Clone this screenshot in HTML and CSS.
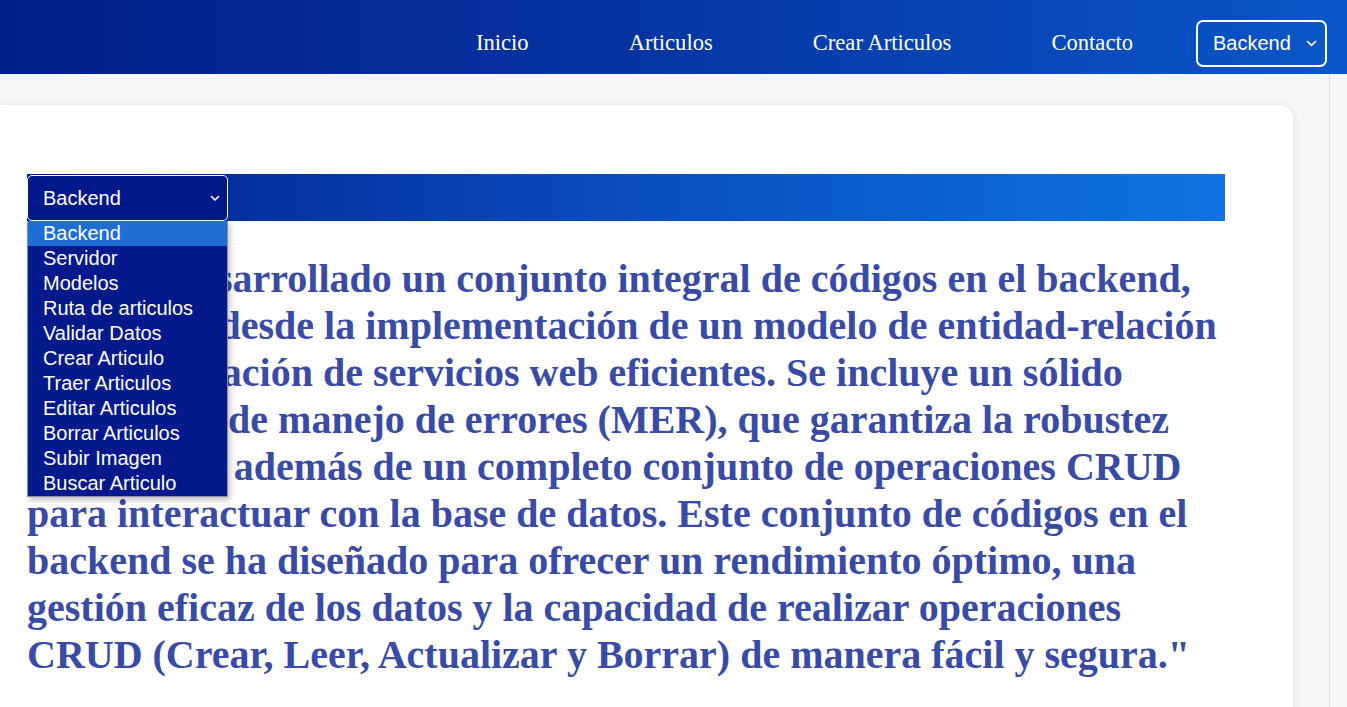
FILE: index.html
```html
<!DOCTYPE html>
<html lang="es">
<head>
<meta charset="utf-8">
<title>Backend</title>
<link rel="stylesheet" href="styles.css">
</head>
<body>
<header class="topbar">
  <nav class="nav">
    <a class="nav-link" href="#">Inicio</a>
    <a class="nav-link" href="#">Articulos</a>
    <a class="nav-link" href="#">Crear Articulos</a>
    <a class="nav-link" href="#">Contacto</a>
  </nav>
  <div class="top-select">
    <span class="top-select-label">Backend</span>
    <svg class="chev" width="11" height="7" viewBox="0 0 11 7"><path d="M1.5 1.5 L5.5 5.3 L9.5 1.5" fill="none" stroke="#fff" stroke-width="1.7" stroke-linecap="round" stroke-linejoin="round"/></svg>
  </div>
</header>
<div class="page">
  <main class="main">
    <section class="card">
      <div class="bar">
        <div class="picker">
          <div class="picker-box">
            <span class="picker-label">Backend</span>
            <svg class="chev" width="10" height="7" viewBox="0 0 10 7"><path d="M1.5 1.5 L5 5 L8.5 1.5" fill="none" stroke="#fff" stroke-width="1.6" stroke-linecap="round" stroke-linejoin="round"/></svg>
          </div>
          <ul class="picker-list">
            <li class="picker-item is-active">Backend</li>
            <li class="picker-item">Servidor</li>
            <li class="picker-item">Modelos</li>
            <li class="picker-item">Ruta de articulos</li>
            <li class="picker-item">Validar Datos</li>
            <li class="picker-item">Crear Articulo</li>
            <li class="picker-item">Traer Articulos</li>
            <li class="picker-item">Editar Articulos</li>
            <li class="picker-item">Borrar Articulos</li>
            <li class="picker-item">Subir Imagen</li>
            <li class="picker-item">Buscar Articulo</li>
          </ul>
        </div>
      </div>
      <p class="lead">"Hemos desarrollado un conjunto integral de códigos en el backend, abarcando desde la implementación de un modelo de entidad-relación hasta la creación de servicios web eficientes. Se incluye un sólido mecanismo de manejo de errores (MER), que garantiza la robustez estabilidad, además de un completo conjunto de operaciones CRUD para interactuar con la base de datos. Este conjunto de códigos en el backend se ha diseñado para ofrecer un rendimiento óptimo, una gestión eficaz de los datos y la capacidad de realizar operaciones CRUD (Crear, Leer, Actualizar y Borrar) de manera fácil y segura."</p>
    </section>
  </main>
  <div class="scroll-strip"></div>
</div>
</body>
</html>
```

FILE: styles.css
```css
* { box-sizing: border-box; }

html, body {
  margin: 0;
  padding: 0;
  height: 100%;
  overflow: hidden;
}

body {
  background: #f5f6f8;
  font-family: "Liberation Serif", "Times New Roman", serif;
}

.topbar {
  height: 74px;
  display: flex;
  align-items: center;
  justify-content: flex-end;
  padding: 12px 20px 0 0;
  background: linear-gradient(to right, #021e8a 0%, #0533a0 45%, #0a57c9 100%);
}

.nav {
  display: flex;
  gap: 100px;
  align-items: center;
}

.nav-link {
  color: #ffffff;
  text-decoration: none;
  font-family: "Liberation Serif", "Times New Roman", serif;
  font-size: 22.6px;
  line-height: 26px;
}

.top-select {
  margin-left: 63px;
  width: 131px;
  height: 47px;
  border: 2px solid #ffffff;
  border-radius: 7px;
  display: flex;
  align-items: center;
  justify-content: space-between;
  padding: 0 8px 0 15px;
  color: #ffffff;
  font-family: "Liberation Sans", Arial, sans-serif;
  font-size: 20px;
}

.top-select-label { line-height: 24px; }

.page {
  display: flex;
  height: calc(100% - 74px);
}

.main {
  flex: 1;
  padding-top: 31px;
}

.scroll-strip {
  width: 18px;
  background: #f5f6f8;
  border-left: 1px solid #dcdcdf;
}

.card {
  margin-right: 36px;
  height: 700px;
  background: #ffffff;
  border-radius: 0 14px 0 0;
  box-shadow: 0 0 10px rgba(0, 0, 0, 0.07);
  padding: 69px 68px 0 27px;
}

.bar {
  height: 47px;
  display: flex;
  align-items: flex-end;
  background: linear-gradient(to right, #031f8d 0%, #0a4dbf 50%, #0e74e3 100%);
}

.picker {
  position: relative;
  width: 201px;
}

.picker-box {
  height: 46px;
  background: #03188a;
  border: 1px solid #ffffff;
  border-radius: 5px;
  display: flex;
  align-items: center;
  justify-content: space-between;
  padding: 0 7px 0 15px;
  color: #ffffff;
  font-family: "Liberation Sans", Arial, sans-serif;
  font-size: 20px;
}

.picker-list {
  position: absolute;
  top: 46px;
  left: 0;
  width: 201px;
  margin: 0;
  padding: 0;
  list-style: none;
  background: #04198c;
  border: 1px solid #8a8fb0;
  border-top: none;
  box-shadow: 2px 3px 6px rgba(0, 0, 0, 0.25);
  z-index: 5;
}

.picker-item {
  height: 25px;
  line-height: 25px;
  padding-left: 15px;
  color: #ffffff;
  font-family: "Liberation Sans", Arial, sans-serif;
  font-size: 20px;
}

.picker-item.is-active {
  background: #1e6ed4;
}

.lead {
  margin: 34px 0 0 0;
  width: 1197px;
  color: #3a4ba6;
  font-family: "Liberation Serif", "Times New Roman", serif;
  font-weight: bold;
  font-size: 40px;
  line-height: 47px;
}
```
